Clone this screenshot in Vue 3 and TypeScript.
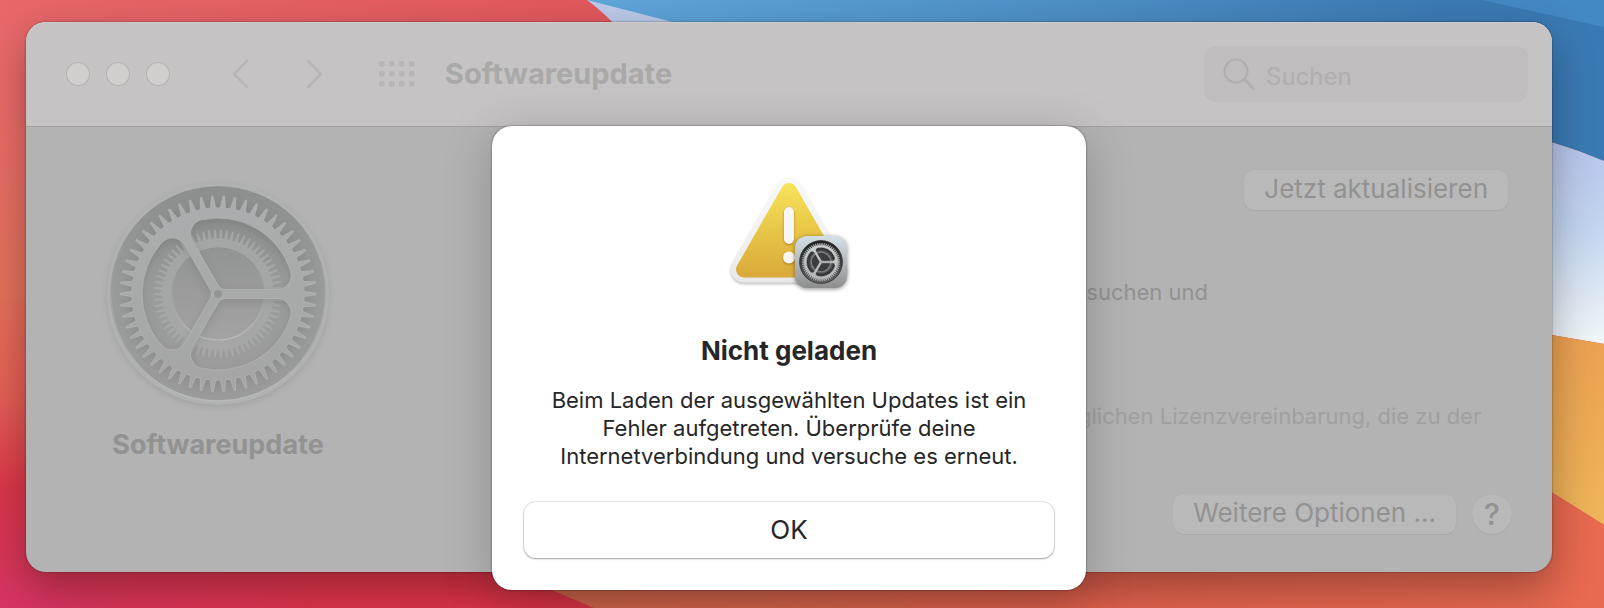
<script setup lang="ts">
import { ref } from 'vue'

type Point = [number, number]

const search = ref('')
const sheetOpen = ref(true)
const windowControls = ['Schließen', 'Minimieren', 'Zoomen']
const gridDots = Array.from({ length: 12 }, (_, i) => ({
  x: (i % 4) * 10,
  y: Math.floor(i / 4) * 10,
}))

const fmt = (p: Point): string => `${p[0].toFixed(2)} ${p[1].toFixed(2)}`
const polar = (radius: number, angle: number): Point => [
  radius * Math.cos(angle),
  radius * Math.sin(angle),
]
const rotate = ([x, y]: Point, angle: number): Point => [
  x * Math.cos(angle) - y * Math.sin(angle),
  x * Math.sin(angle) + y * Math.cos(angle),
]

/* Closed outline of a toothed wheel centred on the origin. */
function toothedOutline(teeth: number, root: number, tip: number): string {
  const step = (Math.PI * 2) / teeth
  const points: Point[] = []
  for (let i = 0; i < teeth; i++) {
    const a = i * step
    points.push(
      polar(root, a - step * 0.3),
      polar(root + (tip - root) * 0.15, a - step * 0.23),
      polar(tip, a - step * 0.06),
      polar(tip, a + step * 0.06),
      polar(root + (tip - root) * 0.15, a + step * 0.23),
      polar(root, a + step * 0.3),
    )
  }
  return `M${points.map(fmt).join('L')}Z`
}

function ring(radius: number): string {
  return `M${radius} 0A${radius} ${radius} 0 1 0 ${-radius} 0A${radius} ${radius} 0 1 0 ${radius} 0Z`
}

/* Rounded opening between two spokes of the front wheel. */
function opening(turn: number): string {
  const rim = 76
  const half = 4.5
  const corner = 14
  const inner = 8
  const cx = Math.sqrt((rim - corner) ** 2 - (half + corner) ** 2)
  const k = rim / (rim - corner)
  const hub: Point = [(half + inner) / Math.tan(Math.PI / 3), -half]
  const edge: Point = [cx, -half]
  const arc: Point = [cx * k, -(half + corner) * k]
  const mirror = ([x, y]: Point): Point => rotate([x, -y], (-Math.PI * 2) / 3)
  const at = (p: Point) => fmt(rotate(p, turn))
  return (
    `M${at(hub)}L${at(edge)}A${corner} ${corner} 0 0 0 ${at(arc)}` +
    `A${rim} ${rim} 0 0 0 ${at(mirror(arc))}` +
    `A${corner} ${corner} 0 0 0 ${at(mirror(edge))}L${at(mirror(hub))}` +
    `A${inner} ${inner} 0 0 0 ${at(hub)}Z`
  )
}

const third = (Math.PI * 2) / 3
const frontWheel =
  toothedOutline(54, 86, 98) + opening(0) + opening(third) + opening(third * 2) + ring(4)
const backWheel = toothedOutline(66, 55, 64) + ring(46)
</script>

<template>
  <div class="desktop">
    <svg class="wallpaper" viewBox="0 0 1604 608" preserveAspectRatio="none" aria-hidden="true">
      <defs>
        <linearGradient id="wpRed" x1="0" y1="0" x2="0" y2="1">
          <stop offset="0" stop-color="#e8676b" />
          <stop offset="0.2" stop-color="#e96c68" />
          <stop offset="0.48" stop-color="#e6715b" />
          <stop offset="0.66" stop-color="#e45f55" />
          <stop offset="0.8" stop-color="#dd374a" />
          <stop offset="1" stop-color="#d63463" />
        </linearGradient>
        <linearGradient id="wpRedSide" x1="0" y1="0" x2="640" y2="0" gradientUnits="userSpaceOnUse">
          <stop offset="0" stop-color="#e0343f" stop-opacity="0" />
          <stop offset="0.5" stop-color="#e03340" stop-opacity="0.7" />
          <stop offset="1" stop-color="#de3342" stop-opacity="0.9" />
        </linearGradient>
        <linearGradient id="wpRedTop" x1="0" y1="0" x2="600" y2="0" gradientUnits="userSpaceOnUse">
          <stop offset="0" stop-color="#de4e54" stop-opacity="0" />
          <stop offset="1" stop-color="#de4e54" stop-opacity="0.6" />
        </linearGradient>
        <linearGradient id="wpBlue" x1="600" y1="0" x2="1604" y2="0" gradientUnits="userSpaceOnUse">
          <stop offset="0" stop-color="#5fa6da" />
          <stop offset="0.5" stop-color="#4c8ec4" />
          <stop offset="0.85" stop-color="#3b7ab3" />
          <stop offset="1" stop-color="#3a7ab4" />
        </linearGradient>
        <linearGradient id="wpIce" x1="0" y1="140" x2="0" y2="340" gradientUnits="userSpaceOnUse">
          <stop offset="0" stop-color="#b6c4ea" />
          <stop offset="0.45" stop-color="#c3d5f0" />
          <stop offset="1" stop-color="#f0f6f8" />
        </linearGradient>
        <linearGradient id="wpAmber" x1="0" y1="335" x2="0" y2="525" gradientUnits="userSpaceOnUse">
          <stop offset="0" stop-color="#eca152" />
          <stop offset="1" stop-color="#efb55a" />
        </linearGradient>
        <linearGradient id="wpCoral" x1="540" y1="0" x2="1604" y2="0" gradientUnits="userSpaceOnUse">
          <stop offset="0" stop-color="#d2684c" />
          <stop offset="0.5" stop-color="#e0604c" />
          <stop offset="1" stop-color="#e86a50" />
        </linearGradient>
      </defs>
      <path d="M0 0H1604V608H0Z" fill="url(#wpRed)" />
      <path d="M0 300H1604V608H0Z" fill="url(#wpRedSide)" />
      <path d="M0 0H700V60H0Z" fill="url(#wpRedTop)" />
      <path d="M587 0Q602 11 616 26V60H760V0Z" fill="#bccbea" />
      <path d="M587 0Q630 11 680 24L760 60H1604V0Z" fill="url(#wpBlue)" />
      <path d="M1300 20H1604V161Q1578 150 1551 142L1300 80Z" fill="url(#wpBlue)" />
      <path d="M1482 0L1604 27V0Z" fill="#4389c3" />
      <path d="M1500 128L1551 142Q1578 150 1604 161V344L1500 326Z" fill="url(#wpIce)" />
      <path d="M1500 326L1604 344V525L1500 460Z" fill="url(#wpAmber)" />
      <path d="M500 568L594 608H1604V525L1551 492L1500 460Z" fill="url(#wpCoral)" />
    </svg>

    <section class="window" aria-label="Softwareupdate">
      <header class="toolbar">
        <div class="lights">
          <button v-for="name in windowControls" :key="name" class="light" type="button" :aria-label="name" />
        </div>
        <nav class="history">
          <button class="tool" type="button" aria-label="Zurück">
            <svg width="18" height="30" viewBox="0 0 18 30">
              <path d="M16 2L3 15L16 28" />
            </svg>
          </button>
          <button class="tool" type="button" aria-label="Vorwärts">
            <svg width="18" height="30" viewBox="0 0 18 30">
              <path d="M2 2L15 15L2 28" />
            </svg>
          </button>
        </nav>
        <button class="tool all" type="button" aria-label="Alle einblenden">
          <svg width="36" height="26" viewBox="0 0 36 26">
            <rect v-for="dot in gridDots" :key="`${dot.x}-${dot.y}`" :x="dot.x" :y="dot.y" width="5.5" height="5.5" rx="1.5" />
          </svg>
        </button>
        <h1 class="heading">Softwareupdate</h1>
        <label class="search">
          <svg width="34" height="34" viewBox="0 0 34 34" aria-hidden="true">
            <circle cx="14" cy="14" r="11.5" stroke-width="2.2" />
            <path d="M22.5 22.5L31 31" stroke-width="3.2" />
          </svg>
          <input v-model="search" type="text" placeholder="Suchen" aria-label="Suchen" />
        </label>
      </header>

      <main class="pane">
        <figure class="badge">
          <svg class="gear" viewBox="-120 -120 240 240" aria-hidden="true">
            <defs>
              <linearGradient id="dimWell" x1="0" y1="0" x2="0" y2="1">
                <stop offset="0" stop-color="#8d8f8f" />
                <stop offset="0.5" stop-color="#9a9b9b" />
                <stop offset="1" stop-color="#9c9c9c" />
              </linearGradient>
              <linearGradient id="dimFront" x1="0" y1="0" x2="0" y2="1">
                <stop offset="0" stop-color="#abaeae" />
                <stop offset="1" stop-color="#a5a5a5" />
              </linearGradient>
              <linearGradient id="dimBack" x1="0" y1="0" x2="0" y2="1">
                <stop offset="0" stop-color="#a4a6a6" />
                <stop offset="1" stop-color="#a6a6a6" />
              </linearGradient>
              <linearGradient id="dimCore" x1="0" y1="0" x2="0" y2="1">
                <stop offset="0" stop-color="#929494" />
                <stop offset="0.5" stop-color="#9b9b9b" />
                <stop offset="1" stop-color="#a3a3a3" />
              </linearGradient>
              <linearGradient id="dimEdge" x1="0" y1="0" x2="0" y2="1">
                <stop offset="0" stop-color="#8b8d8d" />
                <stop offset="0.5" stop-color="#9fa1a1" />
                <stop offset="1" stop-color="#b9bbbb" />
              </linearGradient>
            </defs>
            <circle class="rim" r="111" />
            <circle r="107" fill="url(#dimWell)" stroke="url(#dimEdge)" stroke-width="1.5" />
            <circle r="76" fill="url(#dimWell)" />
            <circle r="46" fill="url(#dimCore)" />
            <path class="dim-back" :d="backWheel" fill="url(#dimBack)" fill-rule="evenodd" />
            <circle r="46" fill="none" stroke="url(#dimEdge)" stroke-width="1.2" />
            <path class="dim-front" :d="frontWheel" fill="url(#dimFront)" fill-rule="evenodd" />
            <circle r="4" fill="#929393" />
          </svg>
          <figcaption>Softwareupdate</figcaption>
        </figure>

        <div class="details">
          <button class="push first" type="button">Jetzt aktualisieren</button>
          <p class="status">rsuchen und</p>
          <p class="license">glichen Lizenzvereinbarung, die zu der</p>
          <div class="actions">
            <button class="push" type="button">Weitere Optionen ...</button>
            <button class="push help" type="button" aria-label="Hilfe">?</button>
          </div>
        </div>
      </main>

      <div v-if="sheetOpen" class="sheet" role="alertdialog" aria-labelledby="sheet-title" aria-describedby="sheet-text">
        <svg class="alert" viewBox="0 0 128 128" aria-hidden="true">
          <defs>
            <linearGradient id="plate" x1="0" y1="11" x2="0" y2="117" gradientUnits="userSpaceOnUse">
              <stop offset="0" stop-color="#f9f9f9" />
              <stop offset="0.6" stop-color="#f1f1f1" />
              <stop offset="1" stop-color="#e8e8e8" />
            </linearGradient>
            <linearGradient id="yellow" x1="0" y1="17" x2="0" y2="111" gradientUnits="userSpaceOnUse">
              <stop offset="0" stop-color="#f8e35c" />
              <stop offset="0.5" stop-color="#e8c647" />
              <stop offset="1" stop-color="#d9a93a" />
            </linearGradient>
            <linearGradient id="tile" x1="0" y1="0" x2="0" y2="1">
              <stop offset="0" stop-color="#d3e0e7" />
              <stop offset="0.5" stop-color="#b5babd" />
              <stop offset="1" stop-color="#8d8d8d" />
            </linearGradient>
            <linearGradient id="well" x1="0" y1="0" x2="0" y2="1">
              <stop offset="0" stop-color="#1d1e1f" />
              <stop offset="0.6" stop-color="#444546" />
              <stop offset="1" stop-color="#666666" />
            </linearGradient>
            <linearGradient id="front" x1="0" y1="0" x2="0" y2="1">
              <stop offset="0" stop-color="#cfd5d7" />
              <stop offset="1" stop-color="#b4b4b4" />
            </linearGradient>
          </defs>
          <path class="plate" d="M64 25L19 103H109Z" />
          <path class="sign" d="M64 25L19 103.5H109Z" />
          <g class="mark">
            <rect x="59" y="41" width="10" height="37" rx="5" />
            <circle cx="64" cy="91.5" r="6" />
          </g>
          <rect class="tile" x="70" y="70" width="52" height="52" rx="12" />
          <g transform="translate(96 96) scale(0.193)">
            <circle r="111" fill="url(#well)" stroke="#2b2c2d" stroke-width="4" />
            <circle r="76" fill="#343536" />
            <path :d="backWheel" fill="#77797a" fill-rule="evenodd" />
            <circle r="46" fill="#3c3d3e" />
            <path class="front" :d="frontWheel" fill="url(#front)" fill-rule="evenodd" />
          </g>
        </svg>
        <h2 id="sheet-title">Nicht geladen</h2>
        <p id="sheet-text">
          Beim Laden der ausgewählten Updates ist ein Fehler aufgetreten. Überprüfe deine
          Internetverbindung und versuche es erneut.
        </p>
        <button class="confirm" type="button" @click="sheetOpen = false">OK</button>
      </div>
    </section>
  </div>
</template>

<style>
body {
  margin: 0;
}
</style>

<style scoped>
* {
  box-sizing: border-box;
}

button,
input {
  margin: 0;
  padding: 0;
  border: 0;
  background: none;
  font: inherit;
  color: inherit;
}

h1,
h2,
p,
figure {
  margin: 0;
}

.desktop {
  position: relative;
  isolation: isolate;
  overflow: hidden;
  display: flex;
  min-height: 100vh;
  padding: 22px 52px 36px 26px;
  font-family: Inter, "Liberation Sans", sans-serif;
}

.wallpaper {
  position: absolute;
  inset: 0;
  z-index: -1;
  width: 100%;
  height: 100%;
}

.window {
  position: relative;
  flex: 1;
  display: flex;
  flex-direction: column;
  border-radius: 20px;
  background: #b3b3b3;
  box-shadow:
    0 0 2px rgba(0, 0, 0, 0.5),
    0 16px 44px rgba(0, 0, 0, 0.32);
}

.toolbar {
  display: flex;
  align-items: center;
  height: 105px;
  padding: 0 24px 0 41px;
  border-bottom: 1px solid #a19f9f;
  border-radius: 20px 20px 0 0;
  background: #c5c3c3;
  box-shadow: inset 0 1px 0 #cccaca;
}

.lights {
  display: flex;
  gap: 18px;
}

.light {
  width: 22px;
  height: 22px;
  border-radius: 50%;
  background: #d2cecd;
  box-shadow: 0 0 0 1px #b3b0b0;
}

.history {
  display: flex;
  gap: 35px;
  margin-left: 51px;
}

.tool {
  display: flex;
  align-items: center;
  justify-content: center;
  width: 40px;
  height: 40px;
  fill: none;
  stroke: #b7b5b5;
  stroke-width: 2.5;
  stroke-linecap: round;
  stroke-linejoin: round;
}

.all {
  width: 44px;
  margin-left: 40px;
  fill: #b7b5b5;
  stroke: none;
}

.heading {
  flex: 1;
  margin-left: 26px;
  font-size: 29px;
  line-height: 36px;
  font-weight: 700;
  color: #aaa9a9;
}

.search {
  display: flex;
  align-items: center;
  gap: 10px;
  width: 324px;
  height: 56px;
  padding: 0 18px;
  border-radius: 12px;
  background: #bfbdbd;
}

.search svg {
  flex: none;
  fill: none;
  stroke: #b1afaf;
  stroke-linecap: round;
}

.search input {
  flex: 1;
  min-width: 0;
  height: 36px;
  padding-top: 4px;
  font-size: 24px;
  line-height: 32px;
  color: #8e8d8d;
  outline: none;
}

.search input::placeholder {
  color: #b0aeae;
  opacity: 1;
}

.pane {
  flex: 1;
  display: flex;
  justify-content: space-between;
  padding: 43px 40px 38px 72px;
}

.badge {
  width: 240px;
  text-align: center;
}

.gear {
  display: block;
  width: 240px;
  height: 240px;
  margin-top: 4px;
  margin-bottom: 14px;
}

.rim {
  fill: #b0b1b1;
  filter: drop-shadow(0 2px 3px rgba(0, 0, 0, 0.1));
}

.dim-back {
  stroke: #abacac;
  stroke-width: 0.5;
}

.dim-front {
  stroke: #b2b4b4;
  stroke-width: 0.8;
  filter: drop-shadow(0 3px 4px rgba(0, 0, 0, 0.1));
}

.badge figcaption {
  font-size: 27px;
  line-height: 34px;
  font-weight: 700;
  color: #929292;
}

.details {
  display: flex;
  flex-direction: column;
  align-items: flex-start;
  width: 434px;
  font-size: 22px;
  line-height: 28px;
  white-space: nowrap;
}

.push {
  height: 40px;
  padding: 0 20px 2px;
  border-radius: 10px;
  background: #b9b9b9;
  box-shadow:
    0 0 1px rgba(0, 0, 0, 0.1),
    0 1px 1px rgba(0, 0, 0, 0.04);
  font-size: 26px;
  line-height: 32px;
  color: #929292;
}

.first {
  align-self: flex-end;
  margin-right: 4px;
}

.status {
  margin-top: 68px;
  color: #929292;
}

.license {
  margin-top: 96px;
  color: #a0a0a0;
}

.actions {
  display: flex;
  gap: 16px;
  align-self: flex-end;
  margin-top: auto;
}

.help {
  width: 40px;
  padding: 0;
  border-radius: 50%;
  font-size: 30px;
  font-weight: 500;
}

.sheet {
  position: absolute;
  top: 104px;
  left: 50%;
  display: flex;
  flex-direction: column;
  align-items: center;
  width: 594px;
  padding: 40px 32px 32px;
  transform: translateX(-50%);
  border-radius: 20px;
  background: #fff;
  box-shadow:
    0 0 2px rgba(0, 0, 0, 0.6),
    0 10px 50px rgba(0, 0, 0, 0.22);
  color: #262626;
  text-align: center;
}

.alert {
  width: 128px;
  height: 128px;
  overflow: visible;
}

.plate {
  fill: url(#plate);
  stroke: url(#plate);
  stroke-width: 27;
  stroke-linejoin: round;
  filter: drop-shadow(0 2px 1px rgba(0, 0, 0, 0.22));
}

.sign {
  fill: url(#yellow);
  stroke: url(#yellow);
  stroke-width: 16;
  stroke-linejoin: round;
}

.mark {
  fill: #f7f6f4;
  filter: drop-shadow(0 1px 1px rgba(110, 75, 0, 0.55));
}

.tile {
  fill: url(#tile);
  filter: drop-shadow(0 1px 2px rgba(0, 0, 0, 0.45));
}

.front {
  stroke: #d5dadc;
  stroke-width: 2;
}

.sheet h2 {
  margin-top: 41px;
  font-size: 26px;
  line-height: 32px;
  font-weight: 700;
}

.sheet p {
  margin-top: 19px;
  font-size: 22px;
  line-height: 28px;
}

.confirm {
  align-self: stretch;
  height: 56px;
  margin-top: 32px;
  padding-bottom: 2px;
  border-radius: 12px;
  background: #fff;
  box-shadow:
    0 0 1px 1px rgba(0, 0, 0, 0.1),
    0 1px 2px rgba(0, 0, 0, 0.3);
  font-size: 26px;
}
</style>
